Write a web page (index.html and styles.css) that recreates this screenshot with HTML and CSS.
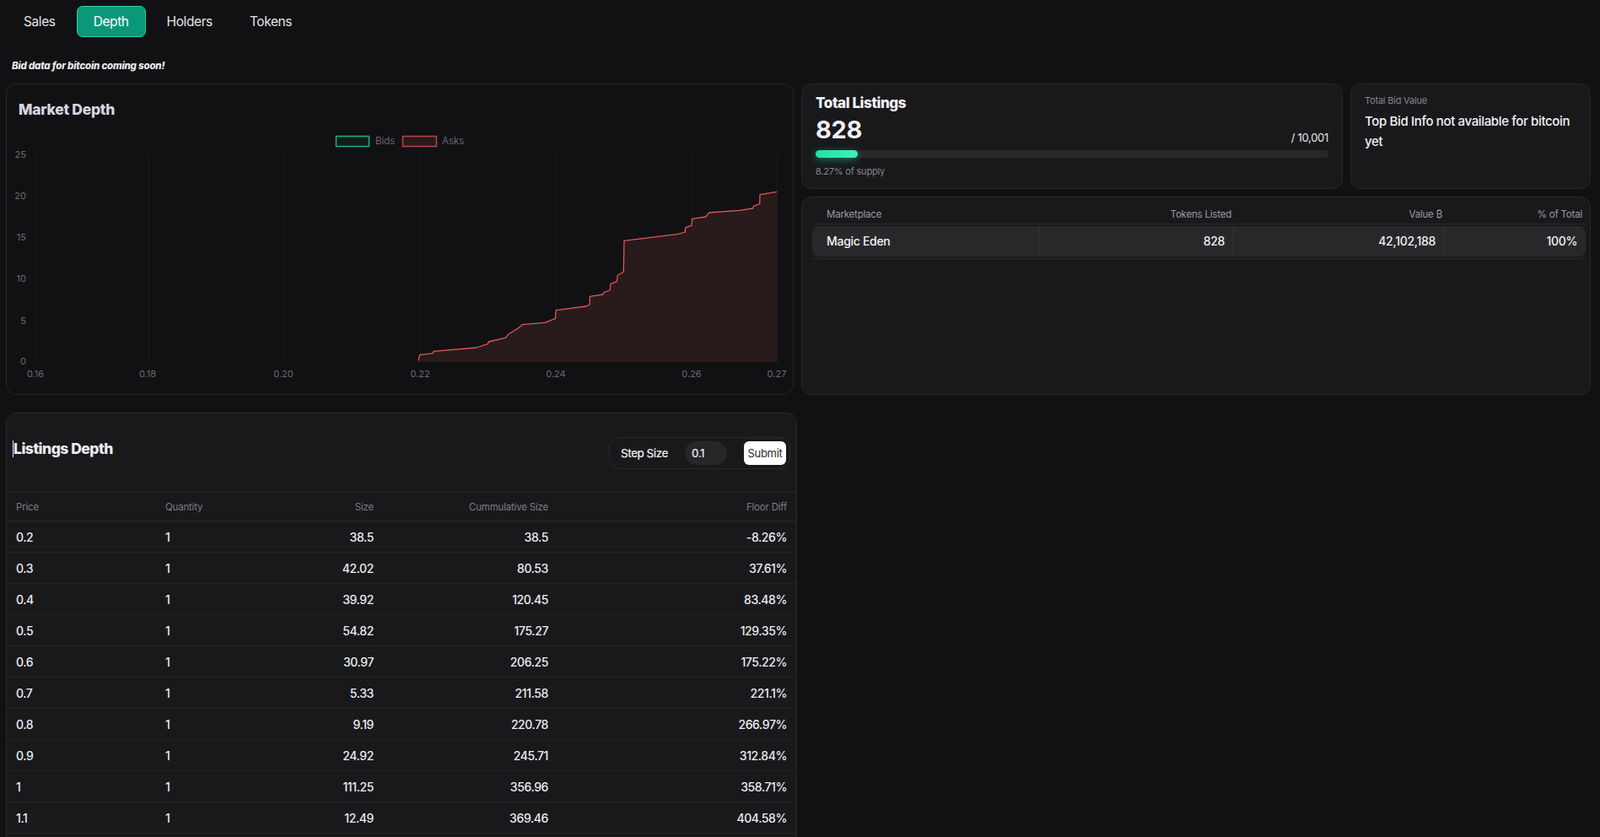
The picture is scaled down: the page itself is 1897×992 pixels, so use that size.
FILE: index.html
```html
<!DOCTYPE html>
<html lang="en">
<head>
<meta charset="utf-8">
<title>Depth</title>
<link rel="stylesheet" href="styles.css">
</head>
<body>
<div class="page">
  <nav class="tabs">
    <span class="tab">Sales</span>
    <span class="tab active">Depth</span>
    <span class="tab">Holders</span>
    <span class="tab">Tokens</span>
  </nav>
  <p class="notice">Bid data for bitcoin coming soon!</p>

  <div class="top">
    <section class="card dark depth-card">
      <h2 class="card-title">Market Depth</h2>
      <svg class="chart" width="932" height="322" viewBox="8 145 932 322" xmlns="http://www.w3.org/2000/svg">
        <g class="grid">
          <line x1="42.5" y1="184" x2="42.5" y2="429"/>
          <line x1="176.5" y1="184" x2="176.5" y2="429"/>
          <line x1="336.5" y1="184" x2="336.5" y2="429"/>
          <line x1="498.5" y1="184" x2="498.5" y2="429"/>
          <line x1="659.5" y1="184" x2="659.5" y2="429"/>
          <line x1="820.5" y1="184" x2="820.5" y2="429"/>
          <line x1="921.5" y1="184" x2="921.5" y2="429"/>
        </g>
        <rect class="leg-bids" x="398.5" y="161.5" width="39" height="12"/>
        <text class="leg-text" x="445" y="171">Bids</text>
        <rect class="leg-asks" x="477.5" y="161.5" width="40" height="12"/>
        <text class="leg-text" x="524" y="171">Asks</text>
        <g class="ylab">
          <text x="31" y="187">25</text>
          <text x="31" y="236">20</text>
          <text x="31" y="285">15</text>
          <text x="31" y="334">10</text>
          <text x="31" y="384">5</text>
          <text x="31" y="432">0</text>
        </g>
        <g class="xlab">
          <text x="42" y="447">0.16</text>
          <text x="175" y="447">0.18</text>
          <text x="336" y="447">0.20</text>
          <text x="498" y="447">0.22</text>
          <text x="659" y="447">0.24</text>
          <text x="820" y="447">0.26</text>
          <text x="921" y="447">0.27</text>
        </g>
        <polygon class="ask-fill" points="496,429 496,427.3 497.7,420.7 513.3,418.7 514,416.3 565,412 578.3,407.7 579.3,405 599.3,400.3 602.7,396.3 614.3,389 619.3,384.7 646,382.3 658.3,377.7 659.3,367.7 695,363 699.3,361 699.3,351.3 715,349 715.7,346.7 723.3,344 724,336.3 731.3,333.7 732.3,326.3 739.3,322.3 740,285.3 804.3,277.3 812.3,275 812.7,269.7 820,267.3 820.7,259.3 836.7,257 840.7,252 876.7,249.3 892.7,247 893.3,244.3 900.7,241.7 901,230.7 921,227.3 921,429"/>
        <polyline class="ask-line" points="496,427.3 497.7,420.7 513.3,418.7 514,416.3 565,412 578.3,407.7 579.3,405 599.3,400.3 602.7,396.3 614.3,389 619.3,384.7 646,382.3 658.3,377.7 659.3,367.7 695,363 699.3,361 699.3,351.3 715,349 715.7,346.7 723.3,344 724,336.3 731.3,333.7 732.3,326.3 739.3,322.3 740,285.3 804.3,277.3 812.3,275 812.7,269.7 820,267.3 820.7,259.3 836.7,257 840.7,252 876.7,249.3 892.7,247 893.3,244.3 900.7,241.7 901,230.7 921,227.3"/>
      </svg>
    </section>

    <div class="right">
      <div class="stats">
        <section class="card listings-card">
          <h3 class="stat-title">Total Listings</h3>
          <div class="stat-row">
            <span class="big">828</span>
            <span class="supply">/ 10,001</span>
          </div>
          <div class="bar"><div class="bar-fill" style="width:8.27%"></div></div>
          <p class="muted">8.27% of supply</p>
        </section>
        <section class="card bid-card">
          <p class="muted small-top">Total Bid Value</p>
          <p class="bid-text">Top Bid Info not available for bitcoin yet</p>
        </section>
      </div>
      <section class="card market-card">
        <div class="mk-head">
          <span class="mk-c1">Marketplace</span>
          <span class="mk-c2">Tokens Listed</span>
          <span class="mk-c3">Value ₿</span>
          <span class="mk-c4">% of Total</span>
        </div>
        <div class="mk-row">
          <span class="mk-c1">Magic Eden</span>
          <span class="mk-c2 sep">828</span>
          <span class="mk-c3 sep">42,102,188</span>
          <span class="mk-c4 sep">100%</span>
        </div>
        <div class="mk-rule"></div>
      </section>
    </div>
  </div>

  <section class="card ld-card">
    <div class="ld-head">
      <h2 class="ld-title">Listings Depth</h2>
      <form class="step">
        <span class="step-label">Step Size</span>
        <span class="step-input">0.1</span>
        <span class="step-btn">Submit</span>
      </form>
    </div>
    <table class="ld-table">
      <thead>
        <tr><th class="c1">Price</th><th class="c2">Quantity</th><th class="c3">Size</th><th class="c4">Cummulative Size</th><th class="c5">Floor Diff</th></tr>
      </thead>
      <tbody>
        <tr><td class="c1">0.2</td><td class="c2">1</td><td class="c3">38.5</td><td class="c4">38.5</td><td class="c5">-8.26%</td></tr>
        <tr><td class="c1">0.3</td><td class="c2">1</td><td class="c3">42.02</td><td class="c4">80.53</td><td class="c5">37.61%</td></tr>
        <tr><td class="c1">0.4</td><td class="c2">1</td><td class="c3">39.92</td><td class="c4">120.45</td><td class="c5">83.48%</td></tr>
        <tr><td class="c1">0.5</td><td class="c2">1</td><td class="c3">54.82</td><td class="c4">175.27</td><td class="c5">129.35%</td></tr>
        <tr><td class="c1">0.6</td><td class="c2">1</td><td class="c3">30.97</td><td class="c4">206.25</td><td class="c5">175.22%</td></tr>
        <tr><td class="c1">0.7</td><td class="c2">1</td><td class="c3">5.33</td><td class="c4">211.58</td><td class="c5">221.1%</td></tr>
        <tr><td class="c1">0.8</td><td class="c2">1</td><td class="c3">9.19</td><td class="c4">220.78</td><td class="c5">266.97%</td></tr>
        <tr><td class="c1">0.9</td><td class="c2">1</td><td class="c3">24.92</td><td class="c4">245.71</td><td class="c5">312.84%</td></tr>
        <tr><td class="c1">1</td><td class="c2">1</td><td class="c3">111.25</td><td class="c4">356.96</td><td class="c5">358.71%</td></tr>
        <tr><td class="c1">1.1</td><td class="c2">1</td><td class="c3">12.49</td><td class="c4">369.46</td><td class="c5">404.58%</td></tr>
        <tr><td class="c1">1.2</td><td class="c2">1</td><td class="c3">8.61</td><td class="c4">378.07</td><td class="c5">450.45%</td></tr>
      </tbody>
    </table>
  </section>
</div>
</body>
</html>
```

FILE: styles.css
```css
* { box-sizing: border-box; }
html, body { margin: 0; padding: 0; }
body {
  background: #111113;
  font-family: Inter, "Noto Sans", sans-serif;
  color: #e8e8ea;
  overflow: hidden;
}
.page { padding: 7px 11px 0 7px; }

/* tabs */
.tabs { display: flex; gap: 6px; padding-left: 2px; height: 37px; }
.tab {
  height: 37px;
  padding: 0 18px;
  display: flex;
  align-items: center;
  font-size: 15.5px;
  letter-spacing: -0.4px;
  color: #e4e4e7;
  border: 1px solid transparent;
  border-radius: 7px;
}
.tab.active { background: #0a977a; border-color: #2ad3a4; color: #fff; padding: 0 19px; }

.notice {
  margin: 27px 0 0 7px;
  font-size: 11.5px;
  line-height: 14px;
  font-weight: 800;
  font-style: italic;
  color: #ececef;
  letter-spacing: -0.2px;
}

/* top grid */
.top {
  display: grid;
  grid-template-columns: 934px 936px;
  column-gap: 9px;
  margin-top: 14px;
}
.card {
  border: 1px solid #28282c;
  border-radius: 12px;
  background: #19191c;
}
.card.dark { background: #111114; }
.depth-card { height: 369px; }
.card-title {
  margin: 0;
  height: 45px;
  padding: 19px 0 0 14px;
  font-size: 17.5px;
  line-height: 22px;
  font-weight: 800;
  color: #d6d6de;
  letter-spacing: -0.3px;
}
.chart { display: block; }
.grid line { stroke: #1b1b1f; stroke-width: 1; }
.leg-bids { fill: #0f1e1b; stroke: #1fae7f; stroke-width: 1.5; }
.leg-asks { fill: #2a1a1c; stroke: #b54646; stroke-width: 1.5; }
.leg-text { font-size: 11.5px; fill: #67676d; font-family: Inter, sans-serif; }
.ylab text { font-size: 11px; fill: #6a6a70; text-anchor: end; font-family: Inter, sans-serif; }
.xlab text { font-size: 11px; fill: #6a6a70; text-anchor: middle; font-family: Inter, sans-serif; }
.ask-fill { fill: #291a1c; }
.ask-line { fill: none; stroke: #e05656; stroke-width: 1.3; stroke-linejoin: round; }

/* right column */
.right { display: flex; flex-direction: column; gap: 9px; }
.stats {
  display: grid;
  grid-template-columns: 642px 285px;
  column-gap: 9px;
  height: 125px;
}
.listings-card { padding: 12px 16px 0 16px; }
.stat-title {
  margin: 0;
  font-size: 17px;
  line-height: 20px;
  font-weight: 800;
  color: #f4f4f6;
  letter-spacing: -0.4px;
}
.stat-row {
  display: flex;
  justify-content: space-between;
  align-items: flex-end;
  margin-top: 6px;
}
.big {
  font-size: 29px;
  line-height: 32px;
  font-weight: 700;
  color: #efeff3;
  letter-spacing: -0.3px;
}
.supply { font-size: 13px; line-height: 14px; color: #e6e6e8; letter-spacing: -0.3px; }
.bar {
  margin-top: 8px;
  height: 9px;
  border-radius: 5px;
  background: #28282b;
}
.bar-fill {
  height: 9px;
  border-radius: 5px;
  background: linear-gradient(90deg, #1ee3a0, #42f0bd);
  box-shadow: 0 2px 8px rgba(30, 227, 160, 0.45);
}
.muted {
  margin: 9px 0 0;
  font-size: 11px;
  line-height: 14px;
  color: #86868c;
  letter-spacing: -0.2px;
}
.bid-card { padding: 12px 16px 0 16px; }
.small-top { margin: 0; }
.bid-text {
  margin: 6px 0 0;
  font-size: 15px;
  line-height: 24px;
  font-weight: 500;
  color: #f2f2f4;
  letter-spacing: -0.35px;
}

.market-card { flex: 1; padding: 8px 5px 0 12px; }
.mk-head, .mk-row {
  display: grid;
  grid-template-columns: 268px 231px 250px 168px;
}
.mk-head {
  height: 24px;
  border-bottom: 1px solid #2a2a2e;
  align-items: center;
  font-size: 11.5px;
  color: #9a9aa0;
  letter-spacing: -0.2px;
}
.mk-head span { padding: 0 2px 0 17px; }
.mk-row span { padding: 0 10px 0 17px; }
.mk-head .mk-c4 { padding-right: 4px; }
.mk-c2, .mk-c3, .mk-c4 { text-align: right; }
.mk-row {
  margin-top: 2px;
  height: 36px;
  align-items: center;
  background: #28282b;
  border-radius: 8px;
  font-size: 14px;
  font-weight: 500;
  color: #f2f2f4;
  letter-spacing: -0.3px;
}
.mk-row span { height: 36px; line-height: 36px; }
.mk-row .sep { border-left: 1px solid #37373b; }
.mk-rule { margin-top: 2px; height: 1px; background: #2a2a2e; }

/* listings depth */
.ld-card {
  width: 938px;
  margin-top: 21px;
  height: 560px;
}
.ld-head {
  display: flex;
  justify-content: space-between;
  align-items: flex-start;
  padding: 28px 7px 27px 7px;
}
.ld-title {
  margin: 3px 0 0;
  font-size: 17.5px;
  line-height: 22px;
  font-weight: 800;
  color: #ececef;
  letter-spacing: -0.5px;
  display: flex;
  align-items: center;
}
.ld-title::before {
  content: "";
  width: 1px;
  height: 20px;
  background: #e8e8ea;
}
.step {
  margin: 0;
  height: 38px;
  width: 215px;
  display: flex;
  align-items: center;
  border: 1px solid #2b2b2f;
  border-radius: 13px;
  padding: 0 4px 0 13px;
}
.step-label {
  font-size: 13.5px;
  font-weight: 500;
  color: #ececef;
  letter-spacing: -0.5px;
  width: 63px;
}
.step-input {
  width: 50px;
  height: 28px;
  margin-left: 13px;
  border-radius: 14px;
  background: #262629;
  padding-left: 8px;
  line-height: 28px;
  font-size: 13px;
  font-weight: 500;
  color: #ececef;
  letter-spacing: -0.4px;
}
.step-btn {
  width: 50px;
  height: 28px;
  margin-left: 20px;
  border-radius: 6px;
  background: #ffffff;
  color: #2a2a2e;
  font-size: 13px;
  line-height: 28px;
  text-align: center;
  letter-spacing: -0.3px;
}
.ld-table {
  width: 936px;
  border-collapse: collapse;
  table-layout: fixed;
}
.ld-table th {
  height: 34px;
  font-size: 11.5px;
  font-weight: 400;
  color: #7c7c82;
  border-top: 1px solid #28282c;
  border-bottom: 1px solid #28282c;
  letter-spacing: -0.2px;
}
.ld-table td {
  height: 37px;
  font-size: 14px;
  font-weight: 500;
  color: #ececef;
  border-bottom: 1px solid #252528;
  letter-spacing: -0.4px;
}
.c1 { width: 177px; text-align: left; padding-left: 11px; }
.c2 { width: 135px; text-align: left; padding-left: 11px; }
.c3 { width: 134px; text-align: right; padding-right: 11px; }
.c4 { width: 207px; text-align: right; padding-right: 11px; }
.c5 { width: 283px; text-align: right; padding-right: 11px; }
```
